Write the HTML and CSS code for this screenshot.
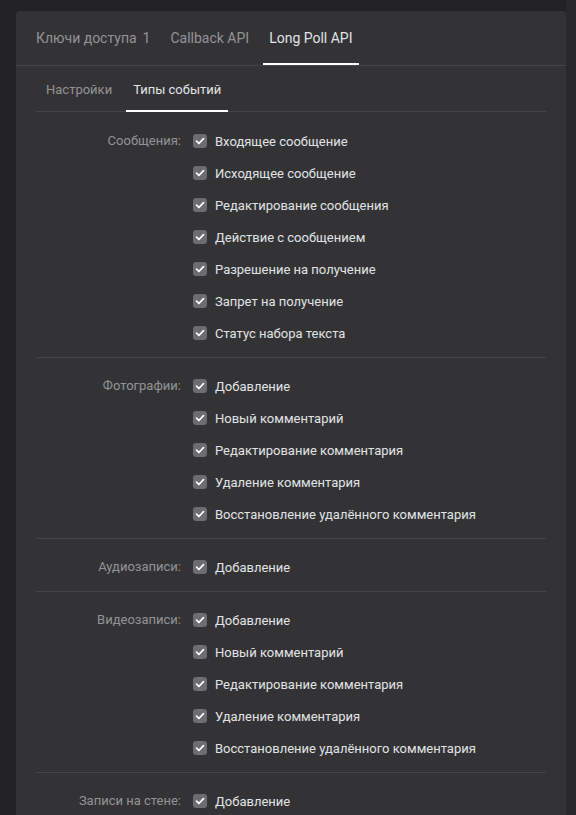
FILE: index.html
```html
<!DOCTYPE html>
<html lang="ru">
<head>
<meta charset="utf-8">
<link rel="stylesheet" href="styles.css">
</head>
<body>
<div class="page">
  <div class="card">
    <div class="tabs">
      <div class="tab">Ключи доступа <span class="counter">1</span></div>
      <div class="tab">Callback API</div>
      <div class="tab active">Long Poll API</div>
    </div>
    <div class="content">
      <div class="subtabs">
        <div class="subtab">Настройки</div>
        <div class="subtab active">Типы событий</div>
      </div>

      <div class="section first">
        <div class="label">Сообщения:</div>
        <div class="options">
          <div class="opt"><span class="cb"><svg viewBox="0 0 14 14"><path d="M3.6 7.2l2.3 2.3 4.6-4.8"/></svg></span>Входящее сообщение</div>
          <div class="opt"><span class="cb"><svg viewBox="0 0 14 14"><path d="M3.6 7.2l2.3 2.3 4.6-4.8"/></svg></span>Исходящее сообщение</div>
          <div class="opt"><span class="cb"><svg viewBox="0 0 14 14"><path d="M3.6 7.2l2.3 2.3 4.6-4.8"/></svg></span>Редактирование сообщения</div>
          <div class="opt"><span class="cb"><svg viewBox="0 0 14 14"><path d="M3.6 7.2l2.3 2.3 4.6-4.8"/></svg></span>Действие с сообщением</div>
          <div class="opt"><span class="cb"><svg viewBox="0 0 14 14"><path d="M3.6 7.2l2.3 2.3 4.6-4.8"/></svg></span>Разрешение на получение</div>
          <div class="opt"><span class="cb"><svg viewBox="0 0 14 14"><path d="M3.6 7.2l2.3 2.3 4.6-4.8"/></svg></span>Запрет на получение</div>
          <div class="opt"><span class="cb"><svg viewBox="0 0 14 14"><path d="M3.6 7.2l2.3 2.3 4.6-4.8"/></svg></span>Статус набора текста</div>
        </div>
      </div>

      <div class="section">
        <div class="label">Фотографии:</div>
        <div class="options">
          <div class="opt"><span class="cb"><svg viewBox="0 0 14 14"><path d="M3.6 7.2l2.3 2.3 4.6-4.8"/></svg></span>Добавление</div>
          <div class="opt"><span class="cb"><svg viewBox="0 0 14 14"><path d="M3.6 7.2l2.3 2.3 4.6-4.8"/></svg></span>Новый комментарий</div>
          <div class="opt"><span class="cb"><svg viewBox="0 0 14 14"><path d="M3.6 7.2l2.3 2.3 4.6-4.8"/></svg></span>Редактирование комментария</div>
          <div class="opt"><span class="cb"><svg viewBox="0 0 14 14"><path d="M3.6 7.2l2.3 2.3 4.6-4.8"/></svg></span>Удаление комментария</div>
          <div class="opt"><span class="cb"><svg viewBox="0 0 14 14"><path d="M3.6 7.2l2.3 2.3 4.6-4.8"/></svg></span>Восстановление удалённого комментария</div>
        </div>
      </div>

      <div class="section">
        <div class="label">Аудиозаписи:</div>
        <div class="options">
          <div class="opt"><span class="cb"><svg viewBox="0 0 14 14"><path d="M3.6 7.2l2.3 2.3 4.6-4.8"/></svg></span>Добавление</div>
        </div>
      </div>

      <div class="section">
        <div class="label">Видеозаписи:</div>
        <div class="options">
          <div class="opt"><span class="cb"><svg viewBox="0 0 14 14"><path d="M3.6 7.2l2.3 2.3 4.6-4.8"/></svg></span>Добавление</div>
          <div class="opt"><span class="cb"><svg viewBox="0 0 14 14"><path d="M3.6 7.2l2.3 2.3 4.6-4.8"/></svg></span>Новый комментарий</div>
          <div class="opt"><span class="cb"><svg viewBox="0 0 14 14"><path d="M3.6 7.2l2.3 2.3 4.6-4.8"/></svg></span>Редактирование комментария</div>
          <div class="opt"><span class="cb"><svg viewBox="0 0 14 14"><path d="M3.6 7.2l2.3 2.3 4.6-4.8"/></svg></span>Удаление комментария</div>
          <div class="opt"><span class="cb"><svg viewBox="0 0 14 14"><path d="M3.6 7.2l2.3 2.3 4.6-4.8"/></svg></span>Восстановление удалённого комментария</div>
        </div>
      </div>

      <div class="section last">
        <div class="label">Записи на стене:</div>
        <div class="options">
          <div class="opt"><span class="cb"><svg viewBox="0 0 14 14"><path d="M3.6 7.2l2.3 2.3 4.6-4.8"/></svg></span>Добавление</div>
        </div>
      </div>
    </div>
  </div>
</div>
</body>
</html>
```

FILE: styles.css
```css
html, body {
  margin: 0;
  padding: 0;
  background: #222225;
  height: 815px;
  overflow: hidden;
}
body {
  font-family: Roboto, "Liberation Sans", Arial, sans-serif;
  -webkit-font-smoothing: antialiased;
}
.page {
  display: flex;
  padding: 11px 0 0 16px;
  height: 815px;
  box-sizing: border-box;
  background: linear-gradient(to right, #222225 566px, #29292c 566px);
}
.card {
  width: 550px;
  background: #333335;
  border-radius: 4px 4px 0 0;
}
.tabs {
  display: flex;
  gap: 8px;
  padding: 0 14px;
  height: 54px;
  border-bottom: 1px solid #454547;
  box-sizing: content-box;
}
.tab {
  display: flex;
  align-items: center;
  padding: 0 6px;
  height: 54px;
  box-sizing: border-box;
  font-size: 14px;
  color: #939396;
  border-bottom: 2px solid transparent;
  padding-top: 2px;
}
.tab .counter {
  margin-left: 6px;
  font-size: 14px;
}
.tab.active {
  color: #e1e3e6;
  border-bottom-color: #ffffff;
}
.content {
  padding: 0 20px;
}
.subtabs {
  display: flex;
  gap: 7px;
  padding: 0 3px;
  height: 45px;
  border-bottom: 1px solid #454547;
}
.subtab {
  display: flex;
  align-items: center;
  padding: 2px 7px 0;
  font-size: 13px;
  color: #939396;
  border-bottom: 2px solid transparent;
  margin-bottom: -1px;
}
.subtab.active {
  color: #e1e3e6;
  border-bottom-color: #ffffff;
}
.section {
  display: flex;
  gap: 12px;
  padding: 12px 0 8px;
  border-bottom: 1px solid #454547;
}
.section.first {
  padding-top: 13px;
}
.section.last {
  border-bottom: none;
}
.label {
  width: 145px;
  flex: none;
  text-align: right;
  font-size: 13px;
  color: #939396;
  line-height: 32px;
}
.options {
  display: flex;
  flex-direction: column;
}
.opt {
  display: flex;
  align-items: center;
  gap: 8px;
  height: 32px;
  font-size: 13px;
  color: #e1e3e6;
}
.cb {
  width: 14px;
  height: 14px;
  border-radius: 3px;
  background: #6d6d70;
  display: flex;
  flex: none;
}
.cb svg {
  width: 14px;
  height: 14px;
}
.cb path {
  fill: none;
  stroke: #ffffff;
  stroke-width: 1.7;
  stroke-linecap: round;
  stroke-linejoin: round;
}
```
